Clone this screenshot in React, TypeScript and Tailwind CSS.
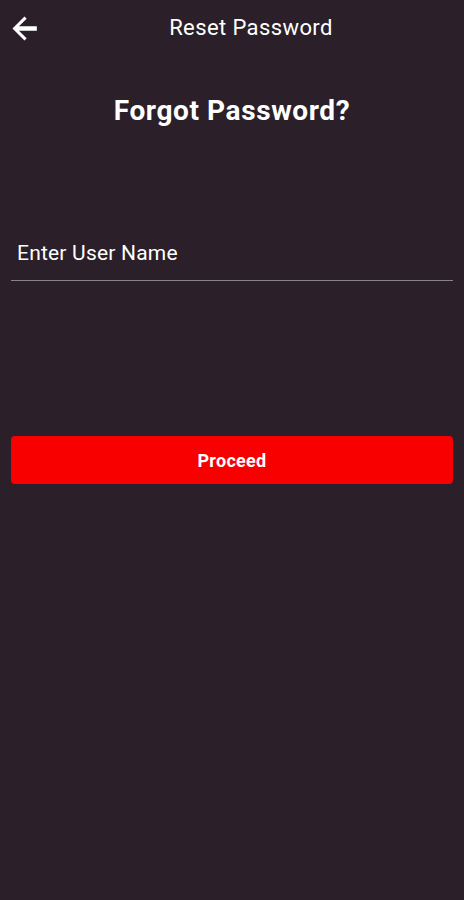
export default function App() {
  return (
    <div
      className="flex min-h-[900px] w-full flex-col bg-[#2b2029] text-white"
      style={{ fontFamily: "Roboto, 'Noto Sans', sans-serif" }}
    >
      {/* top bar */}
      <div className="relative flex h-[56px] items-center justify-center">
        <button className="absolute left-[5px] top-[8px] flex h-[40px] w-[38px] items-center justify-center">
          <svg viewBox="0 0 24 24" className="h-[37px] w-[37px]" fill="currentColor">
            <path d="M20 10.6H8.4l5-5L12 4.2 4.2 12l7.8 7.8 1.4-1.4-5-5H20z" />
          </svg>
        </button>
        <span className="ml-[38px] text-[22px] leading-none tracking-[0.4px]">Reset Password</span>
      </div>

      <h1 className="mt-[41px] text-center text-[28px] font-bold leading-none tracking-[0.6px]">
        Forgot Password?
      </h1>

      {/* username field */}
      <div className="mx-[11px] mt-[117px] border-b border-[#8a8489] pb-[17px] pl-[6px]">
        <input
          className="block h-[21px] w-full bg-transparent text-[21px] leading-none tracking-[0.2px] text-white placeholder-white outline-none"
          placeholder="Enter User Name"
        />
      </div>

      <button className="mx-[11px] mt-[155px] h-[48px] rounded-[4px] bg-[#f80000] text-[18px] font-bold tracking-[0.3px]">
        Proceed
      </button>
    </div>
  );
}
